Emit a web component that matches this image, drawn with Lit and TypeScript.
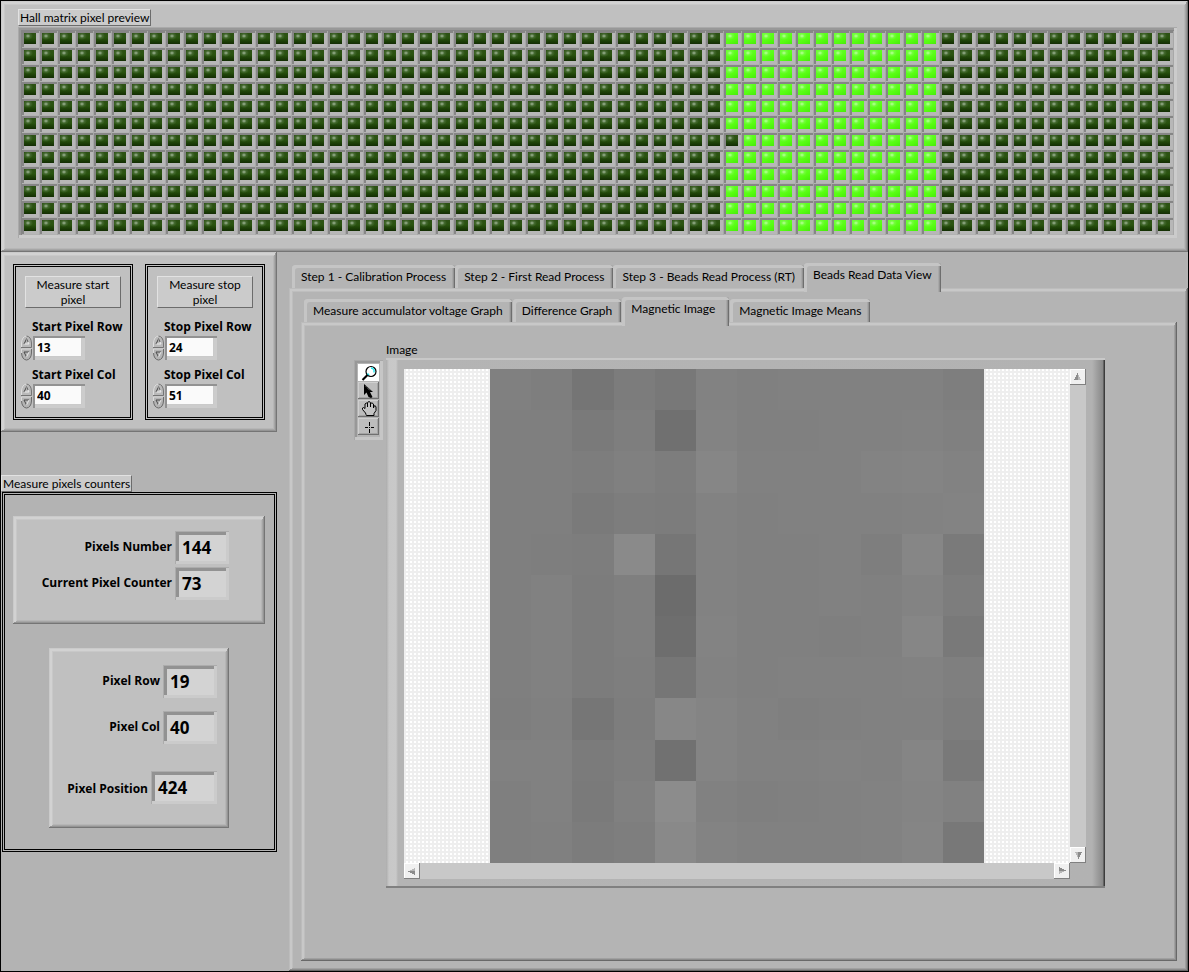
import { LitElement, html, css, svg } from "lit";
import { customElement, property, state } from "lit/decorators.js";
import { classMap } from "lit/directives/class-map.js";
import { styleMap } from "lit/directives/style-map.js";

const LED_ROWS = 12;
const LED_COLS = 64;

/** Grey level (0-255) of every pixel in the magnetic image, row by row. */
const LEVELS: number[][] = [
  [128, 126, 117, 124, 120, 130, 128, 129, 129, 129, 129, 126],
  [127, 127, 122, 126, 112, 131, 128, 128, 129, 129, 130, 128],
  [127, 127, 125, 128, 125, 134, 129, 129, 129, 131, 132, 130],
  [127, 127, 122, 125, 124, 130, 128, 129, 129, 129, 130, 131],
  [127, 126, 125, 138, 118, 130, 128, 128, 129, 126, 134, 122],
  [127, 129, 124, 127, 108, 130, 128, 128, 129, 128, 131, 125],
  [127, 129, 124, 127, 110, 131, 128, 128, 127, 128, 134, 121],
  [127, 129, 124, 126, 118, 130, 128, 129, 129, 129, 130, 127],
  [126, 128, 118, 125, 135, 132, 129, 127, 128, 129, 129, 125],
  [129, 129, 123, 126, 113, 132, 129, 129, 130, 129, 133, 121],
  [127, 129, 122, 128, 140, 129, 127, 128, 129, 130, 132, 129],
  [127, 128, 124, 126, 137, 131, 129, 129, 129, 130, 133, 120],
];

const shared = css`
  *,
  *::before,
  *::after {
    box-sizing: border-box;
  }
  button,
  input {
    font: inherit;
    color: inherit;
    margin: 0;
    padding: 0;
    border: 0;
    border-radius: 0;
    background: none;
  }
  .raised {
    background: #c0c0c0;
    box-shadow:
      inset -1px -1px #757575,
      inset 1px 1px #cacaca,
      inset -2px -2px #949494,
      inset 3px 3px #d2d2d2,
      inset -3px -3px #a6a6a6,
      inset 4px 4px #c8c8c8,
      inset -4px -4px #b6b6b6;
  }
  .tag {
    margin: 0;
    font-size: 12px;
    font-weight: 400;
    line-height: 15px;
    background: #cbcbcb;
    border: 1px solid;
    border-color: #e2e2e2 #6c6c6c #6c6c6c #e2e2e2;
  }
`;

@customElement("led-matrix")
export class LedMatrix extends LitElement {
  static styles = [
    shared,
    css`
      :host {
        display: block;
      }
      .frame {
        padding: 4px 3px 3px 4px;
        background: #b4b4b4;
        box-shadow:
          inset 1px 1px #aaaaaa,
          inset -3px -3px #cbcbcb,
          inset 3px 3px #989898,
          inset 4px 4px #868686;
      }
      .grid {
        display: grid;
        grid-template-columns: repeat(64, 1fr);
      }
      .cell {
        height: 17px;
        padding: 2px 4px 4px 2px;
        background: #b7b7b7;
        box-shadow:
          inset -1px 0 #a8a8a8,
          inset 0 -1px #b2b2b2,
          inset 2px 2px #868686;
      }
      .led {
        height: 11px;
        background:
          radial-gradient(ellipse 5px 4px at 4px 3px, #a3b89a 0, #5f815077 50%, transparent 100%),
          linear-gradient(to bottom, #2d5115 0, #29530f 45%, #1c3f07 75%, #132d03 100%);
      }
      .on {
        background:
          radial-gradient(ellipse 5px 4px at 4px 3px, #bcff9e 0, #8bff5c77 50%, transparent 100%),
          linear-gradient(150deg, #66ff30 0, #58fd12 60%, #46ec0a 100%);
      }
    `,
  ];

  private lit(row: number, col: number) {
    return col >= 39 && col <= 50 && !(row === 6 && col === 39);
  }

  render() {
    const cells = Array.from({ length: LED_ROWS * LED_COLS }, (_, i) => {
      const on = this.lit(Math.floor(i / LED_COLS), i % LED_COLS);
      return html`<div class="cell"><div class=${classMap({ led: true, on })}></div></div>`;
    });
    return html`<div class="frame"><div class="grid">${cells}</div></div>`;
  }
}

@customElement("pixel-spinner")
export class PixelSpinner extends LitElement {
  @property() label = "";
  @property({ type: Number }) value = 0;

  static styles = [
    shared,
    css`
      :host {
        display: block;
        font-family: "Open Sans", "Noto Sans", sans-serif;
      }
      label {
        display: block;
        padding-left: 12px;
        font-size: 12px;
        font-weight: 700;
        line-height: 16px;
        white-space: nowrap;
      }
      .row {
        display: flex;
        align-items: center;
      }
      .arrows {
        display: flex;
        flex-direction: column;
        width: 13px;
      }
      .arrows button {
        display: block;
        height: 13px;
      }
      svg {
        display: block;
      }
      .box {
        width: 52px;
        height: 24px;
        padding: 2px 4px 4px 2px;
        background: #cacaca;
        box-shadow:
          inset 2px 2px #929292,
          inset -3px -3px #cccccc;
      }
      input {
        display: block;
        width: 100%;
        height: 18px;
        padding-left: 2px;
        background: #fafafa;
        font-size: 12px;
        font-weight: 700;
      }
    `,
  ];

  private step(by: number) {
    this.value += by;
  }

  render() {
    return html`
      <label for="v">${this.label}</label>
      <div class="row">
        <div class="arrows">
          <button aria-label="Increase ${this.label}" @click=${() => this.step(1)}>
            <svg width="13" height="13" viewBox="0 0 13 13">
              <path d="M1 12.500V8Q1.500 1 6.500 .5Q11.500 1 12 8V12.500Z" fill="#b9b9b9" />
              <path d="M1.500 12V8Q2 1.500 6.500 1" fill="none" stroke="#dedede" />
              <path d="M6.500 1Q11 1.500 11.500 8V12.500H1" fill="none" stroke="#757575" />
              <path d="M4 9L6.500 4" stroke="#444" fill="none" />
              <path d="M6.500 4L9 9H4.500" stroke="#eee" fill="none" />
              <path d="M6.500 3.500L8 7" stroke="#555" fill="none" />
            </svg>
          </button>
          <button aria-label="Decrease ${this.label}" @click=${() => this.step(-1)}>
            <svg width="13" height="13" viewBox="0 0 13 13">
              <path d="M1 .5V5Q1.500 12 6.500 12.500Q11.500 12 12 5V.5Z" fill="#b4b4b4" />
              <path d="M1.500 6V1H11.500" fill="none" stroke="#dadada" />
              <path d="M1.500 5Q2 11.500 6.500 12Q11 11.500 11.500 5V1" fill="none" stroke="#6c6c6c" />
              <path d="M9 4H4L6.500 9" stroke="#4a4a4a" fill="none" />
              <path d="M6.500 9L9 4" stroke="#e8e8e8" fill="none" />
            </svg>
          </button>
        </div>
        <div class="box"><input id="v" type="text" inputmode="numeric" .value=${String(this.value)} /></div>
      </div>
    `;
  }
}

@customElement("magnetic-image")
export class MagneticImage extends LitElement {
  @state() private tool = 0;

  static styles = [
    shared,
    css`
      :host {
        display: grid;
        grid-template-columns: 29px 1fr;
        column-gap: 3px;
      }
      .caption {
        grid-column: 2;
        margin: 0;
        font-size: 12px;
        font-weight: 400;
        line-height: 17px;
      }
      .palette {
        align-self: start;
        display: flex;
        flex-direction: column;
        gap: 1px;
        margin-top: 2px;
        padding: 4px;
        padding-bottom: 5px;
        background: #b4b4b4;
        box-shadow:
          inset 1px 1px #a8a8a8,
          inset -3px -3px #c6c6c6,
          inset 3px 3px #989898;
      }
      .tool {
        display: block;
        width: 21px;
        height: 17px;
        background: #bdbdbd;
        box-shadow:
          inset -1px -1px #707070,
          inset 1px 1px #d0d0d0,
          inset -2px -2px #a4a4a4;
      }
      .picked {
        background: #ffffff;
        box-shadow: none;
      }
      svg {
        display: block;
      }
      .frame {
        display: grid;
        grid-template-columns: 1fr 16px;
        grid-template-rows: auto 16px;
        padding: 9px 19px 7px 18px;
        background: linear-gradient(
          to right,
          #acacac 0,
          #c8c8c8 3px,
          #c9c9c9 10px,
          #b4b4b4 12px,
          #b2b2b2 calc(100% - 13px),
          #888888 calc(100% - 2px),
          #3c3c3c calc(100% - 1px)
        );
        border-top: 2px solid #c8c8c8;
        border-bottom: 2px solid #808080;
      }
      .view {
        display: flex;
        justify-content: center;
        padding: 0 86px;
        background-color: #eeeeee;
        background-image: conic-gradient(#ffffff 25%, transparent 0 75%, transparent 0);
        background-size: 4px 4px;
      }
      .pixels {
        flex: 1;
        aspect-ratio: 1;
        display: grid;
        grid-template-columns: repeat(12, 1fr);
        grid-template-rows: repeat(12, 1fr);
        background: #808080;
      }
      .bar {
        display: flex;
        justify-content: space-between;
        background: #c8c8c8;
      }
      .vertical {
        flex-direction: column;
      }
      .arrow {
        width: 16px;
        height: 16px;
        background: #f0f0f0;
        box-shadow:
          inset -1px -1px #808080,
          inset 1px 1px #ffffff;
      }
    `,
  ];

  private icons = [
    svg`<circle cx="13" cy="7.500" r="5" fill="#fff" stroke="#000" stroke-width="1.200"/>
      <path d="M13 4Q15 4 16 6V8.500M9.500 9.500L11 11" stroke="#20e8f0" stroke-width="1.400" fill="none"/>
      <path d="M9.500 11L4.500 16" stroke="#000" stroke-width="2.200"/>`,
    svg`<path d="M6 2V13L8.500 10.500L10.500 15L13 16L14.500 15L12 10H15Z" fill="#000"/>
      <path d="M8 4.500L12.500 9" stroke="#aaa" stroke-dasharray="1 1"/>`,
    svg`<path d="M8 14.500L7.500 13L4.500 9.500Q4 7.500 5.500 7.500L7 8.500V4Q8.500 2 9.500 4V7V2.500Q11 .5 12.500 2.500V7V3.500Q14 2 15.500 4V8L16 6Q17.500 5 18 7V10.500L16 13.500V15.500H8.500Z"
      fill="#c4c4c4" stroke="#000"/>`,
    svg`<path d="M11.500 4V8M11.500 11V15M7 9.500H10M13 9.500H16M11 9.500H12" stroke="#000" fill="none"/>`,
  ];

  private names = ["Zoom", "Select", "Pan", "Probe"];

  private arrow(dir: string, turn: number) {
    return html`<button class="arrow" aria-label="Scroll ${dir}">
      <svg width="16" height="16" viewBox="0 0 16 16">
        <g transform="rotate(${turn} 8 8)">
          <path d="M7 4H8V6H9V8H10V10H11V11H4V10H5V8H6V6H7Z" fill="#8c8c8c" />
          <path d="M8 6H9V8H10V10H11V11H8Z" fill="#b8b8b8" />
        </g>
      </svg>
    </button>`;
  }

  render() {
    return html`
      <h2 class="caption">Image</h2>
      <div class="palette">
        ${this.icons.map(
          (icon, i) => html`<button
            class=${classMap({ tool: true, picked: this.tool === i })}
            aria-label=${this.names[i]}
            @click=${() => (this.tool = i)}
          >
            <svg width="21" height="17" viewBox="0 0 21 17">${icon}</svg>
          </button>`,
        )}
      </div>
      <div class="frame">
        <div class="view">
          <div class="pixels">
            ${LEVELS.flat().map((v) => html`<div style=${styleMap({ background: `rgb(${v},${v},${v})` })}></div>`)}
          </div>
        </div>
        <div class="bar vertical">${this.arrow("up", 0)}${this.arrow("down", 180)}</div>
        <div class="bar">${this.arrow("left", -90)}${this.arrow("right", 90)}</div>
      </div>
    `;
  }
}

@customElement("app-root")
export class AppRoot extends LitElement {
  @state() private step = 3;
  @state() private view = 2;

  private steps = [
    "Step 1 - Calibration Process",
    "Step 2 - First Read Process",
    "Step 3 - Beads Read Process (RT)",
    "Beads Read Data View",
  ];

  private views = [
    "Measure accumulator voltage Graph",
    "Difference Graph",
    "Magnetic Image",
    "Magnetic Image Means",
  ];

  static styles = [
    shared,
    css`
      :host {
        display: flex;
        flex-direction: column;
        box-sizing: border-box;
        min-height: 100vh;
        border: 1px solid #000;
        background: #b3b3b3;
        color: #000;
        font-family: Lato, "Noto Sans", sans-serif;
        font-size: 12px;
      }
      .preview {
        padding: 8px 11px 14px 17px;
      }
      .preview .tag,
      .counters > .tag {
        width: fit-content;
        padding: 0 1px;
      }
      .preview led-matrix {
        margin-top: 1px;
      }
      .body {
        flex: 1;
        display: flex;
        gap: 12px;
      }
      .side {
        width: 276px;
      }
      .limits {
        display: flex;
        gap: 12px;
        padding: 12px;
      }
      .limit {
        flex: 1;
        min-width: 0;
        height: 156px;
        padding: 9px 4px;
        border: 3px double #000;
      }
      .limit .tag {
        margin: 0 5px 11px;
        text-align: center;
      }
      .limit pixel-spinner + pixel-spinner {
        margin-top: 6px;
      }
      .counters {
        margin-top: 43px;
      }
      .group {
        display: flex;
        flex-direction: column;
        margin-left: 1px;
        padding: 21px 9px 21px 8px;
        height: 360px;
        border: 3px double #000;
      }
      .totals {
        display: flex;
        flex-direction: column;
        gap: 3px;
        height: 108px;
        padding: 15px 36px 15px 12px;
      }
      .position {
        display: flex;
        flex-direction: column;
        gap: 13px;
        width: 180px;
        height: 180px;
        margin: 24px 36px 0;
        padding: 17px 12px;
      }
      .line {
        display: flex;
        justify-content: flex-end;
        gap: 3px;
        font-family: "Open Sans", "Noto Sans", sans-serif;
        font-weight: 700;
        line-height: 32px;
        white-space: nowrap;
      }
      .last {
        margin-top: 14px;
        line-height: 36px;
      }
      output {
        width: 54px;
        height: 33px;
        padding: 2px 7px;
        background: #d3d3d3;
        font-size: 17px;
        line-height: 30px;
        box-shadow:
          inset 1px 1px #acacac,
          inset -3px -3px #cbcbcb,
          inset 4px 4px #929292;
      }
      .wide {
        width: 66px;
      }
      .main {
        flex: 1;
        min-width: 0;
        display: flex;
        flex-direction: column;
        padding-top: 11px;
      }
      .tabs {
        display: flex;
        align-items: flex-end;
        gap: 1px;
        height: 25px;
        padding-left: 3px;
      }
      .tab {
        height: 23px;
        padding: 0 9px;
        line-height: 23px;
        white-space: nowrap;
        border-radius: 3px 3px 0 0;
        background: #b4b4b4;
        box-shadow:
          inset 3px 3px #c5c5c5,
          inset -1px 0 #6e6e6e,
          inset -2px 0 #949494,
          inset -3px 0 #a8a8a8;
      }
      .active {
        position: relative;
        z-index: 1;
        height: 29px;
        margin-bottom: -4px;
        padding: 0 14px 6px 9px;
      }
      .main > .tabs {
        gap: 0;
      }
      .main > .tabs .active {
        padding-right: 9px;
      }
      .pane {
        flex: 1;
        display: flex;
        flex-direction: column;
        background: #b4b4b4;
        box-shadow:
          inset -1px -1px #686868,
          inset 1px 1px #bcbcbc,
          inset -2px -2px #8c8c8c,
          inset 3px 3px #c8c8c8,
          inset -3px -3px #a0a0a0,
          inset 4px 4px #bebebe;
      }
      .outer {
        padding: 9px 11px 10px 12px;
      }
      .inner {
        padding: 19px 72px 20px 53px;
      }
    `,
  ];

  private tabs(names: string[], active: number, pick: (i: number) => void) {
    return html`<div class="tabs" role="tablist">
      ${names.map(
        (name, i) => html`<button
          role="tab"
          aria-selected=${i === active}
          class=${classMap({ tab: true, active: i === active })}
          @click=${() => pick(i)}
        >
          ${name}
        </button>`,
      )}
    </div>`;
  }

  render() {
    return html`
      <section class="preview raised">
        <h2 class="tag">Hall matrix pixel preview</h2>
        <led-matrix></led-matrix>
      </section>
      <div class="body">
        <aside class="side">
          <section class="limits raised">
            <div class="limit">
              <h3 class="tag">Measure start<br />pixel</h3>
              <pixel-spinner label="Start Pixel Row" value="13"></pixel-spinner>
              <pixel-spinner label="Start Pixel Col" value="40"></pixel-spinner>
            </div>
            <div class="limit">
              <h3 class="tag">Measure stop<br />pixel</h3>
              <pixel-spinner label="Stop Pixel Row" value="24"></pixel-spinner>
              <pixel-spinner label="Stop Pixel Col" value="51"></pixel-spinner>
            </div>
          </section>
          <section class="counters">
            <h2 class="tag">Measure pixels counters</h2>
            <div class="group">
              <div class="totals raised">
                <div class="line"><label for="number">Pixels Number</label><output id="number">144</output></div>
                <div class="line"><label for="counter">Current Pixel Counter</label><output id="counter">73</output></div>
              </div>
              <div class="position raised">
                <div class="line"><label for="row">Pixel Row</label><output id="row">19</output></div>
                <div class="line"><label for="col">Pixel Col</label><output id="col">40</output></div>
                <div class="line last">
                  <label for="pos">Pixel Position</label><output id="pos" class="wide">424</output>
                </div>
              </div>
            </div>
          </section>
        </aside>
        <main class="main">
          ${this.tabs(this.steps, this.step, (i) => (this.step = i))}
          <div class="pane outer">
            ${this.tabs(this.views, this.view, (i) => (this.view = i))}
            <div class="pane inner"><magnetic-image></magnetic-image></div>
          </div>
        </main>
      </div>
    `;
  }
}
